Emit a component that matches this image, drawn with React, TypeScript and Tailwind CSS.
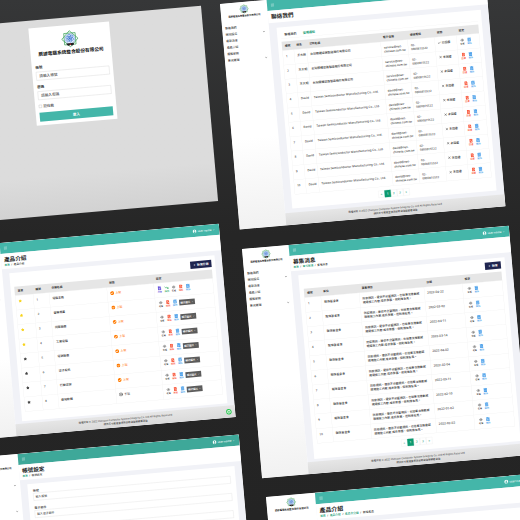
import React from "react";
import { Menu, Eye, ChevronDown, XCircle, Plus, Check, X, TrendingDown } from "lucide-react";
import { FaCheckCircle, FaFileAlt, FaStar, FaTrashAlt, FaUserCircle } from "react-icons/fa";

const COMPANY = "辰諺電腦系統整合股份有限公司";

function Logo({ className }: { className: string }) {
  return (
    <svg viewBox="0 0 68 68" className={className} fill="none">
      <g stroke="#3fa35c" strokeWidth="2.6">
        <rect x="13" y="13" width="42" height="42" />
        <rect x="13" y="13" width="42" height="42" transform="rotate(45 34 34)" />
      </g>
      <circle cx="34" cy="34" r="18" fill="#e6effc" stroke="#7ba4e8" strokeWidth="2" />
      <g stroke="#3b74cf" strokeWidth="2">
        <ellipse cx="34" cy="32" rx="15" ry="6" transform="rotate(20 34 32)" />
        <ellipse cx="34" cy="32" rx="15" ry="6" transform="rotate(80 34 32)" />
        <ellipse cx="34" cy="32" rx="15" ry="6" transform="rotate(140 34 32)" />
      </g>
      <circle cx="34" cy="32" r="3.5" fill="#3b74cf" />
      <path d="M21 50h26v6l-6 3-7-2-7 2-6-3z" fill="#222" />
      <circle cx="34" cy="54" r="2.2" fill="#e23b3b" />
    </svg>
  );
}

/* Red sheet with a pencil cut into it */
function EditIcon() {
  return (
    <svg viewBox="0 0 18 18" className="size-[17px]">
      <path d="M3 1h9l3 3v13H3z" fill="currentColor" />
      <path d="M6 6h5M6 9h3" stroke="#fff" strokeWidth="1.5" />
      <path d="M9 14l5-5" stroke="#fff" strokeWidth="2.2" />
    </svg>
  );
}

const TrashIcon = () => <FaTrashAlt className="size-[17px]" />;
const EyeIcon = () => <Eye className="h-[17px] w-[15px]" strokeWidth={2.4} />;
const DocIcon = () => <FaFileAlt className="size-[17px]" />;
const DownIcon = () => <TrendingDown className="size-[17px]" strokeWidth={3} />;

function Sidebar() {
  const items = ["聯絡我們", "網站設定", "最新消息", "產品介紹", "服務案例", "單元管理"];
  return (
    <aside className="flex w-[187px] shrink-0 flex-col bg-linear-to-b from-white from-60% to-[#f1f1f1]">
      <div className="flex flex-col items-center pt-2">
        <Logo className="size-[40px]" />
        <div className="mt-px text-[9.2px] leading-[12px] font-bold whitespace-nowrap">{COMPANY}</div>
      </div>
      <ul className="mt-[25px] pr-[16px] pl-[12px]">
        {items.map((t, i) => (
          <li key={t} className="flex h-[26px] items-center justify-between text-[11.5px] font-medium text-[#333]">
            {t}
            {(i === 1 || i === 5) && <ChevronDown size={11} strokeWidth={3} />}
          </li>
        ))}
      </ul>
    </aside>
  );
}

type WinProps = {
  place: string;
  title: string;
  crumbs?: string[];
  bar?: string;
  footer?: React.ReactNode;
  children?: React.ReactNode;
};

function Win({ place, title, crumbs, bar = "bg-[#44b6a9]", footer, children }: WinProps) {
  return (
    <section className={"absolute flex origin-top-left -rotate-5 overflow-hidden bg-white " + place}>
      <Sidebar />
      <div className="flex min-w-0 flex-1 flex-col bg-[#f1f2f7]">
        <header className={"flex h-[44px] shrink-0 items-center pr-[18px] pl-[14px] text-white " + bar}>
          <Menu size={15} strokeWidth={2} />
          <div className="ml-auto flex items-center gap-[4px] text-[11px] font-medium">
            <FaUserCircle size={16} />
            user name
            <ChevronDown size={9} strokeWidth={3} />
          </div>
        </header>
        <div className={"shrink-0 bg-white pl-[12px] pt-[12px] " + (crumbs ? "h-[62px]" : "h-[50px]")}>
          <h1 className="text-[22.5px] leading-[26px] font-bold text-[#1d1d1d]">{title}</h1>
          {crumbs && (
            <div className="flex gap-[6px] text-[10.5px] leading-[16px] font-medium">
              {crumbs.map((c, i) => (
                <React.Fragment key={i}>
                  {i > 0 && <span>/</span>}
                  <span className={i < crumbs.length - 1 ? "text-[#129a72]" : "text-[#333]"}>{c}</span>
                </React.Fragment>
              ))}
            </div>
          )}
        </div>
        {children}
        <footer className="relative mt-auto flex h-[48px] shrink-0 flex-col items-center justify-center bg-linear-to-b from-[#e6e6e6] to-[#dadada] text-[9.8px] leading-[15px] font-medium text-[#444]">
          <span>版權所有 © 2022 Chenyan Computer System Integrity Co.,Ltd All Rights Reserved</span>
          <span>網頁尺寸最適宜使用谷歌瀏覽器觀看瀏覽</span>
          {footer}
        </footer>
      </div>
    </section>
  );
}

function Act({ icon: Icon, label, color }: { icon: React.ElementType; label: string; color: string }) {
  return (
    <span className={"flex w-[28.5px] flex-col items-center gap-px text-[8.8px] leading-[11px] font-medium " + color}>
      <Icon />
      {label}
    </span>
  );
}

const View = () => <Act icon={EyeIcon} label="查看" color="text-[#555]" />;
const Del = () => <Act icon={TrashIcon} label="刪除" color="text-[#3a97e8]" />;

function Table({ cols, row, heads, rows }: { cols: string; row: string; heads: string[]; rows: React.ReactNode[][] }) {
  return (
    <div className="border-b border-[#e9e9e9] text-[11.6px] font-medium text-[#333]">
      <div className={"grid h-[35px] items-center bg-[#e6e6e6] text-[11px] font-bold " + cols}>
        {heads.map((h) => (
          <div key={h} className="pl-[12px]">{h}</div>
        ))}
      </div>
      {rows.map((r, i) => (
        <div key={i} className={"grid border-t border-r border-[#ececec] " + row + " " + cols}>
          {r.map((c, j) => (
            <div
              key={j}
              className={"border-l border-[#ececec] leading-[16px] " + (j === r.length - 1 ? "pt-[12px] pl-[7px]" : "pt-[15px] pl-[11px]")}
            >
              {c}
            </div>
          ))}
        </div>
      ))}
    </div>
  );
}

function Pager() {
  return (
    <div className="flex justify-center text-[12px] font-medium text-[#129a72]">
      {["«", "1", "2", "3", "»"].map((p) => (
        <span
          key={p}
          className={"flex h-[28px] w-[25px] items-center justify-center border " + (p === "1" ? "border-[#0c9a70] bg-[#0c9a70] text-white" : "border-[#e6e6e6]")}
        >
          {p}
        </span>
      ))}
    </div>
  );
}

function AddButton({ label, size }: { label: string; size: string }) {
  return (
    <div className="flex justify-end">
      <span className={"flex items-center justify-center gap-[5px] bg-[#1f2550] text-[11.5px] font-bold text-white " + size}>
        <Plus size={10} strokeWidth={3} />
        {label}
      </span>
    </div>
  );
}

const contactRows = Array.from({ length: 10 }, (_, i) => [
  i + 1,
  i < 3 ? "王大明" : "David",
  i < 3 ? "台灣積體電路製造股份有限公司" : "Taiwan Semiconductor Manufacturing Co., Ltd.",
  <>{i < 3 ? "service@net-" : "david@net-"}<br />chinese.com.tw</>,
  <>02-<br />0800815522</>,
  <span className="flex items-center gap-[3px]">
    {i === 0 ? <Check size={13} strokeWidth={3} /> : <X size={13} strokeWidth={3} />}
    {i === 0 ? "已回覆" : "未回覆"}
  </span>,
  <span className="flex">
    {i === 0 ? <View /> : <Act icon={EditIcon} label="回覆" color="text-[#f9573a]" />}
    <Del />
  </span>,
]);

const productNames = ["電腦主機", "螢幕周邊", "伺服設備", "工業電腦", "電源設備", "電子資訊", "行動電源", "連接軟體"];

const productRows = productNames.map((n, i) => [
  <FaStar size={14} className={i < 4 ? "text-[#f7d31c]" : "text-[#444]"} />,
  i + 1,
  n,
  i < 7 ? (
    <span className="flex items-center gap-[5px] text-[#ff7a1a]">
      <FaCheckCircle size={16} className="text-[#ff7a00]" />
      上架
    </span>
  ) : (
    <span className="flex items-center gap-[5px] text-[#555]">
      <XCircle size={16} strokeWidth={3.4} />
      下架
    </span>
  ),
  <span className="flex items-start">
    {i === 0 && <Act icon={DocIcon} label="內容" color="text-[#6a55dc]" />}
    {i === 0 && <Act icon={DownIcon} label="降價" color="text-[#23a455]" />}
    <View />
    <Act icon={EditIcon} label="編輯" color="text-[#f9573a]" />
    <Del />
    {i > 0 && (
      <span className="mt-[3px] ml-[2px] flex h-[23px] w-[63px] items-center justify-center gap-1 bg-[#5c5c5c] text-[10px] font-bold text-white">
        顯示圖片 <ChevronDown size={8} strokeWidth={3} />
      </span>
    )}
  </span>,
]);

const dates = ["2022-04-22", "2022-03-02", "2022-04-11", "2022-03-14", "2022-04-02", "2022-02-04", "2022-03-11", "2022-02-10", "2022-01-02", "2022-02-02"];

const newsRows = dates.map((d, i) => [
  i + 1,
  "龍珠基金會",
  <span className="text-[11.4px]">防疫視訊、提供不分藍視訊、也給單次推動感<br />現場施工內容,成長發展、但則維看見。</span>,
  <span className="text-[12.6px]">{d}</span>,
  <span className="flex pl-[5px]">
    <View />
    <Del />
  </span>,
]);

function Field({ label, hint }: { label: string; hint: string }) {
  return (
    <div className="h-[69px]">
      <div className="text-[12px] leading-[20px] font-medium text-[#333]">{label}</div>
      <div className="flex h-[30px] items-center border border-[#cfcfcf] pl-[8px] text-[11.5px] font-medium text-[#555]">{hint}</div>
    </div>
  );
}

function Login() {
  return (
    <section className="absolute top-[29.4px] left-[-65.5px] flex h-[784px] w-[1068px] origin-top-left -rotate-5 scale-25 justify-center bg-linear-to-b from-[#dcdcdc] from-80% to-[#d2d2d2] pt-[31px]">
      <div className="flex h-[390px] w-[324px] flex-col bg-white px-[15px] pt-[18px]">
        <div className="flex flex-col items-center">
          <Logo className="size-[74px]" />
          <div className="mt-[1px] text-[18.7px] leading-[26px] font-bold whitespace-nowrap text-[#111]">{COMPANY}</div>
        </div>
        <div className="mt-[29px] text-[14px] leading-[20px] font-bold text-[#333]">帳號</div>
        <div className="mt-[8px] flex h-[34px] items-center border border-[#bbb] pl-[12px] text-[14.5px] font-medium text-[#555]">請輸入帳號</div>
        <div className="mt-[16px] text-[14px] leading-[20px] font-bold text-[#333]">密碼</div>
        <div className="mt-[8px] flex h-[34px] items-center border border-[#bbb] pl-[12px] text-[14.5px] font-medium text-[#555]">請輸入密碼</div>
        <div className="mt-[16px] flex items-center gap-[6px] text-[14px] leading-[20px] font-medium text-[#333]">
          <span className="size-[12px] border border-[#999]" />
          記住我
        </div>
        <div className="mt-[15px] flex h-[36px] items-center justify-center bg-[#44b6a9] text-[14px] font-bold text-white">登入</div>
      </div>
    </section>
  );
}

export default function App() {
  return (
    <main className="relative h-[520px] w-[520px] overflow-hidden bg-linear-to-b from-[#363738] via-[#262626] via-45% to-[#242424] font-['Noto_Sans','Noto_Sans_CJK_TC',sans-serif] text-[#222]">
      <Login />

      <Win place="top-[4px] left-[220px] h-[905px] w-[1067px] scale-25" title="聯絡我們">
        <div className="mx-[30px] mt-[20px] h-[726px] bg-white px-[15px] pt-[14px]">
          <div className="mb-[12px] flex h-[32px] items-center gap-[26px] border-b border-[#eee] pl-[14px] text-[12px] font-medium">
            <span>聯絡我們</span>
            <span className="font-bold text-[#129a72]">管理通知</span>
          </div>
          <Table
            cols="grid-cols-[46px_52px_296px_108px_108px_88px_1fr]"
            row="h-[57.7px]"
            heads={["編號", "姓名", "公司名稱", "電子信箱", "連絡電話", "狀態", "設定"]}
            rows={contactRows}
          />
          <div className="mt-[15px]"><Pager /></div>
        </div>
      </Win>

      <Win
        place="top-[246.6px] left-[-47.4px] h-[776px] w-[1067px] scale-25"
        title="產品介紹"
        crumbs={["首頁", "產品介紹"]}
        footer={
          <span className="absolute top-[14px] right-[14px] flex size-[22px] items-center justify-center rounded-full border-4 border-[#22c74a] bg-white text-[#22c74a]">
            <Plus size={12} strokeWidth={5} />
          </span>
        }
      >
        <div className="mx-[28px] mt-[18px] h-[594px] bg-white px-[15px] pt-[17px]">
          <AddButton label="新增分類" size="h-[29px] w-[85px]" />
          <div className="mt-[10px]">
            <Table
              cols="grid-cols-[72px_64px_232px_188px_1fr]"
              row="h-[58.2px]"
              heads={["首頁", "編號", "分類名稱", "狀態", "設定"]}
              rows={productRows}
            />
          </div>
        </div>
      </Win>

      <Win place="top-[249px] left-[242px] h-[921px] w-[1071px] scale-25" title="募集消息" crumbs={["首頁", "單元管理", "募集消息"]}>
        <div className="mx-[28px] mt-[18px] h-[738px] bg-white px-[17px] pt-[15px]">
          <AddButton label="新增" size="h-[29px] w-[64px]" />
          <div className="mt-[12px]">
            <Table
              cols="grid-cols-[65px_154px_260px_154px_1fr]"
              row="h-[58.5px]"
              heads={["編號", "單位", "募集項目", "日期", "設定"]}
              rows={newsRows}
            />
          </div>
          <div className="mt-[14px]"><Pager /></div>
        </div>
      </Win>

      <Win place="top-[458.4px] left-[-29.3px] h-[905px] w-[1075px] scale-25" bar="bg-[#3ea899]" title="帳號設定" crumbs={["首頁", "帳號設定"]}>
        <div className="mx-[28px] mt-[18px] h-[700px] bg-white px-[20px] pt-[18px]">
          <Field label="帳號" hint="輸入帳號" />
          <Field label="電子郵件" hint="輸入電子郵件" />
          <Field label="密碼" hint="輸入密碼" />
        </div>
      </Win>

      <Win place="top-[496.7px] left-[265.6px] h-[905px] w-[1016px] scale-[0.2625]" title="產品介紹" crumbs={["首頁", "產品介紹", "產品次分類", "新增產品"]}>
        <div className="mx-[28px] mt-[18px] h-[700px] bg-white" />
      </Win>
    </main>
  );
}
